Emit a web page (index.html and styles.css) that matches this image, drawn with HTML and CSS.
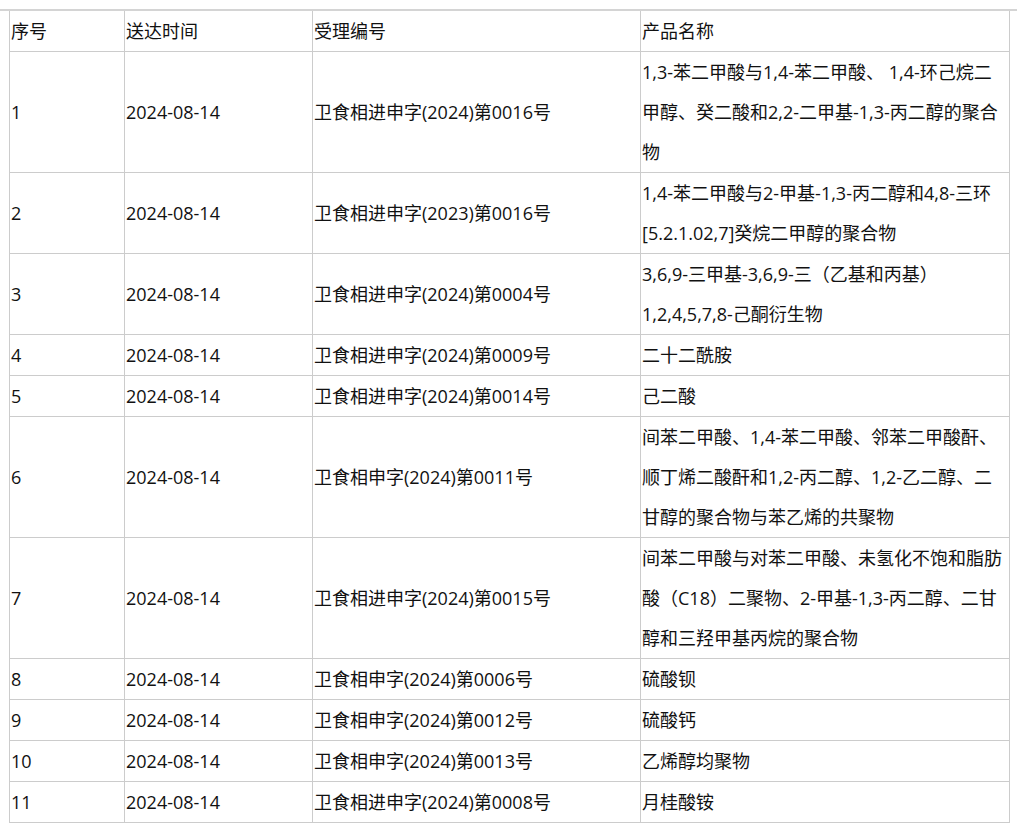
FILE: index.html
```html
<!DOCTYPE html>
<html lang="zh-CN">
<head>
<meta charset="utf-8">
<title>受理产品</title>
<link rel="stylesheet" href="styles.css">
</head>
<body>
<div class="page">
  <table class="list">
    <colgroup>
      <col class="c1"><col class="c2"><col class="c3"><col class="c4">
    </colgroup>
    <thead>
      <tr><th>序号</th><th>送达时间</th><th>受理编号</th><th>产品名称</th></tr>
    </thead>
    <tbody>
      <tr><td>1</td><td>2024-08-14</td><td>卫食相进申字(2024)第0016号</td><td>1,3-苯二甲酸与1,4-苯二甲酸、 1,4-环己烷二<br>甲醇、癸二酸和2,2-二甲基-1,3-丙二醇的聚合<br>物</td></tr>
      <tr><td>2</td><td>2024-08-14</td><td>卫食相进申字(2023)第0016号</td><td>1,4-苯二甲酸与2-甲基-1,3-丙二醇和4,8-三环<br>[5.2.1.02,7]癸烷二甲醇的聚合物</td></tr>
      <tr><td>3</td><td>2024-08-14</td><td>卫食相进申字(2024)第0004号</td><td>3,6,9-三甲基-3,6,9-三（乙基和丙基）<br>1,2,4,5,7,8-己酮衍生物</td></tr>
      <tr><td>4</td><td>2024-08-14</td><td>卫食相进申字(2024)第0009号</td><td>二十二酰胺</td></tr>
      <tr><td>5</td><td>2024-08-14</td><td>卫食相进申字(2024)第0014号</td><td>己二酸</td></tr>
      <tr><td>6</td><td>2024-08-14</td><td>卫食相申字(2024)第0011号</td><td>间苯二甲酸、1,4-苯二甲酸、邻苯二甲酸酐、<br>顺丁烯二酸酐和1,2-丙二醇、1,2-乙二醇、二<br>甘醇的聚合物与苯乙烯的共聚物</td></tr>
      <tr><td>7</td><td>2024-08-14</td><td>卫食相进申字(2024)第0015号</td><td>间苯二甲酸与对苯二甲酸、未氢化不饱和脂肪<br>酸（C18）二聚物、2-甲基-1,3-丙二醇、二甘<br>醇和三羟甲基丙烷的聚合物</td></tr>
      <tr><td>8</td><td>2024-08-14</td><td>卫食相申字(2024)第0006号</td><td>硫酸钡</td></tr>
      <tr><td>9</td><td>2024-08-14</td><td>卫食相申字(2024)第0012号</td><td>硫酸钙</td></tr>
      <tr><td>10</td><td>2024-08-14</td><td>卫食相申字(2024)第0013号</td><td>乙烯醇均聚物</td></tr>
      <tr><td>11</td><td>2024-08-14</td><td>卫食相进申字(2024)第0008号</td><td>月桂酸铵</td></tr>
    </tbody>
  </table>
</div>
</body>
</html>
```

FILE: styles.css
```css
html, body {
  margin: 0;
  padding: 0;
  background: #fff;
}

.page {
  margin-top: 9px;
  border-top: 2px solid #d4d4d4;
  padding-left: 9px;
}

.list {
  border-collapse: collapse;
  table-layout: fixed;
  width: 1000px;
  font-family: "Open Sans", "Noto Sans CJK SC", "Microsoft YaHei", sans-serif;
  font-size: 18px;
  line-height: 40px;
  color: #111;
}

.c1 { width: 115px; }
.c2 { width: 188px; }
.c3 { width: 328px; }
.c4 { width: 369px; }

.list th,
.list td {
  border: 1px solid #cccccc;
  padding: 0 0 0 1px;
  text-align: left;
  vertical-align: middle;
  font-weight: normal;
  white-space: nowrap;
}

.list thead th {
  border-top: none;
}
```
